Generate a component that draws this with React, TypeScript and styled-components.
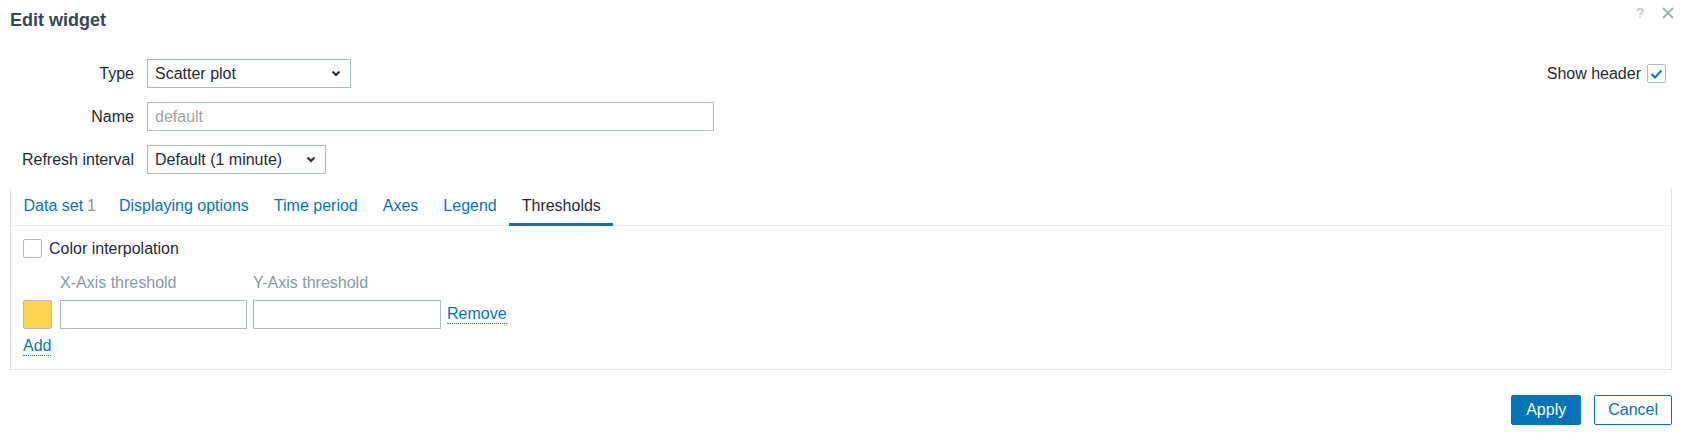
import { styled, createGlobalStyle } from "styled-components";

const GlobalStyle = createGlobalStyle`
    * {
        box-sizing: border-box;
    }

    body {
        margin: 0;
        background-color: #FFFFFF;
        font-family: "Liberation Sans", Arial, sans-serif;
        font-size: 16px;
        color: #1F2C33;
    }
`;

const Chevron = () => (
    <svg width="10" height="7" viewBox="0 0 10 7">
        <path d="M1.5 1.5 L5 5 L8.5 1.5" fill="none" stroke="#1F2C33" strokeWidth="2" />
    </svg>
);

const tabs = ["Data set", "Displaying options", "Time period", "Axes", "Legend", "Thresholds"];

const App = () => {
    return (
        <>
            <GlobalStyle />
            <Dialog>
                <DialogHeader>
                    <DialogTitle>Edit widget</DialogTitle>
                    <HeaderIcons>
                        <HelpIcon>?</HelpIcon>
                        <svg width="12" height="12" viewBox="0 0 12 12">
                            <path d="M1 1 L11 11 M11 1 L1 11" stroke="#A7B2B9" strokeWidth="2" />
                        </svg>
                    </HeaderIcons>
                </DialogHeader>

                <Form>
                    <FormLabel>Type</FormLabel>
                    <Select $width={204}>
                        <span>Scatter plot</span>
                        <Chevron />
                    </Select>
                    <ShowHeader>
                        Show header
                        <Checkbox $checked>
                            <svg width="13" height="10" viewBox="0 0 13 10">
                                <path d="M1.5 5 L5 8.5 L11.5 1.5" fill="none" stroke="#0275B8" strokeWidth="2" />
                            </svg>
                        </Checkbox>
                    </ShowHeader>

                    <FormLabel>Name</FormLabel>
                    <TextInput $width={567} placeholder="default" />
                    <span />

                    <FormLabel>Refresh interval</FormLabel>
                    <Select $width={179}>
                        <span>Default (1 minute)</span>
                        <Chevron />
                    </Select>
                    <span />
                </Form>

                <TabPanel>
                    <TabList>
                        {tabs.map((tab) => (
                            <Tab key={tab} $active={tab === "Thresholds"}>
                                {tab}
                                {tab === "Data set" && <TabCount>1</TabCount>}
                            </Tab>
                        ))}
                    </TabList>
                    <TabContent>
                        <CheckRow>
                            <Checkbox />
                            Color interpolation
                        </CheckRow>
                        <ThresholdGrid>
                            <span />
                            <ThresholdLabel>X-Axis threshold</ThresholdLabel>
                            <ThresholdLabel>Y-Axis threshold</ThresholdLabel>
                            <span />

                            <ColorSwatch $color="#FFD54F" />
                            <TextInput />
                            <TextInput />
                            <DottedLink>Remove</DottedLink>
                        </ThresholdGrid>
                        <AddRow>
                            <DottedLink>Add</DottedLink>
                        </AddRow>
                    </TabContent>
                </TabPanel>

                <Footer>
                    <Button $primary>Apply</Button>
                    <Button>Cancel</Button>
                </Footer>
            </Dialog>
        </>
    );
};

const Dialog = styled.div`
    width: 1681px;
    height: 439px;
    padding: 0 9px 0 10px;
`;

const DialogHeader = styled.div`
    display: flex;
    justify-content: space-between;
    align-items: flex-start;
    padding-top: 10px;
`;

const DialogTitle = styled.h4`
    margin: 0;
    font-size: 18px;
    line-height: 21px;
    font-weight: bold;
    color: #37474F;
`;

const HeaderIcons = styled.div`
    display: flex;
    align-items: center;
    gap: 18px;
    margin-top: -5px;
    margin-right: -2px;
`;

const HelpIcon = styled.span`
    font-size: 14px;
    line-height: 16px;
    color: #B4BEC4;
`;

const Form = styled.div`
    display: grid;
    grid-template-columns: 124px 1fr auto;
    column-gap: 13px;
    row-gap: 14px;
    align-items: center;
    margin-top: 28px;
    margin-right: 6px;
`;

const FormLabel = styled.label`
    text-align: right;
    line-height: 18px;
`;

const Select = styled.div<{ $width: number }>`
    width: ${(p) => p.$width}px;
    height: 29px;
    display: flex;
    align-items: center;
    justify-content: space-between;
    padding: 0 9px 0 7px;
    border: 1px solid #ACBBC2;
    background-color: #FFFFFF;
    line-height: 18px;
`;

const TextInput = styled.input<{ $width?: number }>`
    width: ${(p) => (p.$width ? `${p.$width}px` : "100%")};
    height: 29px;
    padding: 0 7px;
    border: 1px solid #ACBBC2;
    border-radius: 0;
    font-family: inherit;
    font-size: 16px;
    color: #1F2C33;
    outline: none;

    &::placeholder {
        color: #A3A3A3;
    }
`;

const ShowHeader = styled.div`
    display: flex;
    align-items: center;
    gap: 6px;
    line-height: 18px;
`;

const Checkbox = styled.span<{ $checked?: boolean }>`
    width: 19px;
    height: 19px;
    display: inline-flex;
    align-items: center;
    justify-content: center;
    border: 1px solid #ACBBC2;
    border-radius: 2px;
    background-color: #FFFFFF;
    flex-shrink: 0;
`;

const TabPanel = styled.div`
    margin-top: 14px;
    border: 1px solid #DFE4E7;
    border-top: none;
`;

const TabList = styled.div`
    display: flex;
    border-bottom: 1px solid #EBEEF0;
`;

const Tab = styled.div<{ $active?: boolean }>`
    flex-shrink: 0;
    white-space: nowrap;
    padding: 9px 12.5px 8px;
    margin-bottom: -1px;
    line-height: 18px;
    color: ${(p) => (p.$active ? "#1F2C33" : "#0275B8")};
    border-bottom: 3px solid ${(p) => (p.$active ? "#0275B8" : "transparent")};
`;

const TabCount = styled.span`
    margin-left: 4px;
    margin-right: -2px;
    color: #8A98A2;
`;

const TabContent = styled.div`
    padding: 13px 12px;
`;

const CheckRow = styled.div`
    display: flex;
    align-items: center;
    gap: 7px;
    line-height: 18px;
`;

const ThresholdGrid = styled.div`
    display: grid;
    grid-template-columns: 31px 187px 188px auto;
    column-gap: 6px;
    row-gap: 8px;
    align-items: center;
    justify-content: start;
    margin-top: 16px;
`;

const ThresholdLabel = styled.span`
    line-height: 18px;
    color: #8A98A2;
`;

const ColorSwatch = styled.span<{ $color: string }>`
    width: 29px;
    height: 29px;
    background-color: ${(p) => p.$color};
    border: 1px solid #ACBBC2;
    border-radius: 2px;
`;

const DottedLink = styled.a`
    justify-self: start;
    line-height: 18px;
    color: #0275B8;
    border-bottom: 1px dotted #0275B8;
    cursor: pointer;
`;

const AddRow = styled.div`
    display: flex;
    margin-top: 8px;
`;

const Footer = styled.div`
    display: flex;
    justify-content: flex-end;
    gap: 13px;
    margin-top: 25px;
`;

const Button = styled.button<{ $primary?: boolean }>`
    height: 30px;
    padding: 0 ${(p) => (p.$primary ? "14px" : "13px")};
    font-family: inherit;
    font-size: 16px;
    border-radius: 2px;
    border: 1px solid #0275B8;
    background-color: ${(p) => (p.$primary ? "#0275B8" : "#FFFFFF")};
    color: ${(p) => (p.$primary ? "#FFFFFF" : "#0275B8")};
    cursor: pointer;
`;

export default App;
